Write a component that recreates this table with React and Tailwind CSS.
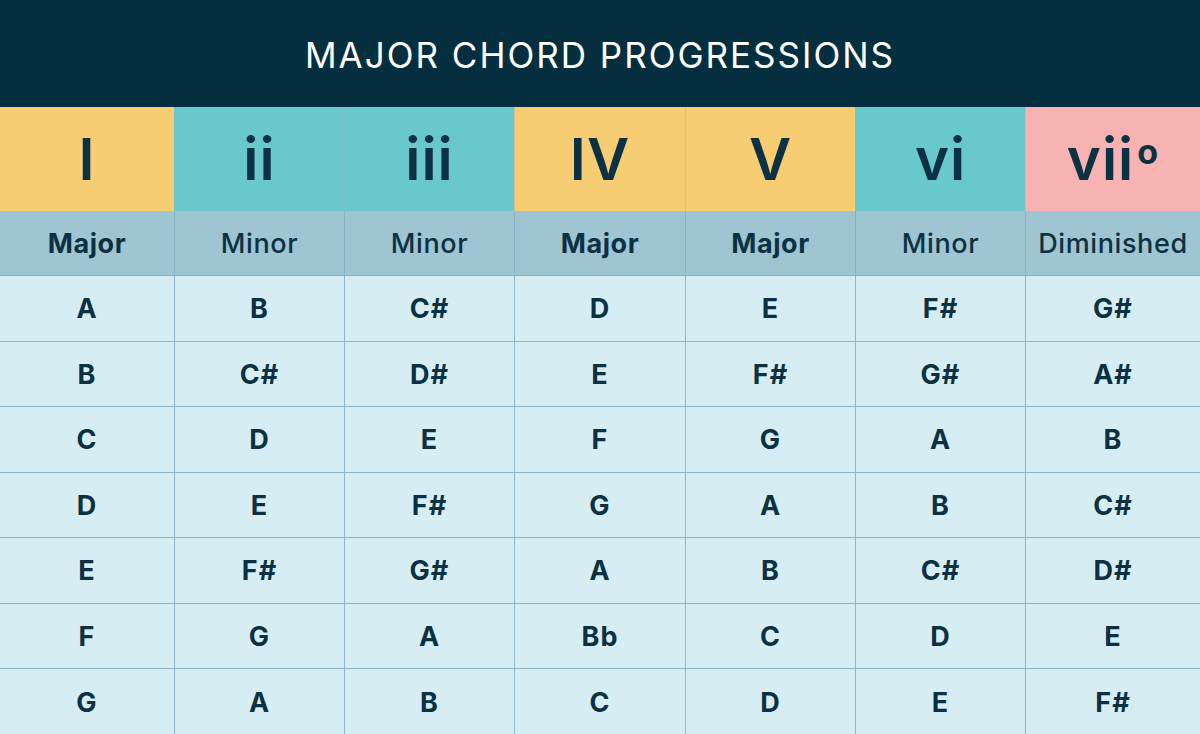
import React from 'react';

const numerals = [
    { label: 'I', bg: 'bg-[#f6cd73]' },
    { label: 'ii', bg: 'bg-[#69c8cc]' },
    { label: 'iii', bg: 'bg-[#69c8cc]' },
    { label: 'IV', bg: 'bg-[#f6cd73]' },
    { label: 'V', bg: 'bg-[#f6cd73]' },
    { label: 'vi', bg: 'bg-[#69c8cc]' },
    { label: 'vii', bg: 'bg-[#f6b3b1]', dim: true },
];

const qualities = [
    { label: 'Major', bold: true },
    { label: 'Minor' },
    { label: 'Minor' },
    { label: 'Major', bold: true },
    { label: 'Major', bold: true },
    { label: 'Minor' },
    { label: 'Diminished' },
];

const rows = [
    ['A', 'B', 'C#', 'D', 'E', 'F#', 'G#'],
    ['B', 'C#', 'D#', 'E', 'F#', 'G#', 'A#'],
    ['C', 'D', 'E', 'F', 'G', 'A', 'B'],
    ['D', 'E', 'F#', 'G', 'A', 'B', 'C#'],
    ['E', 'F#', 'G#', 'A', 'B', 'C#', 'D#'],
    ['F', 'G', 'A', 'Bb', 'C', 'D', 'E'],
    ['G', 'A', 'B', 'C', 'D', 'E', 'F#'],
];

const cols = 'grid grid-cols-[174px_170px_170px_171px_170px_170px_1fr]';

// Chord chart for major keys
const App = () => {
    return (
        <div className="w-[1200px] h-[734px] flex flex-col bg-[#d7edf4] text-[#0b3142] font-['Inter','Noto_Sans',sans-serif] overflow-hidden">
            <div className="h-[107px] shrink-0 bg-[#052f3f] flex items-center justify-center pt-[4px]">
                <h1 className="text-white text-[35px] tracking-[2px] font-normal">MAJOR CHORD PROGRESSIONS</h1>
            </div>
            <div className={`${cols} h-[104px] shrink-0`}>
                {numerals.map((n, i) => (
                    <div key={i} className={`${n.bg} flex items-center justify-center ${i > 0 ? 'border-l border-[#8fb9c6]/40' : ''}`}>
                        <span className="text-[58px] font-semibold leading-none tracking-[1px]">
                            {n.label}
                            {n.dim && <span className="text-[34px] align-[16px] ml-[3px] font-bold">o</span>}
                        </span>
                    </div>
                ))}
            </div>
            <div className={`${cols} h-[65px] shrink-0 bg-[#9fc4d2] border-b border-[#84afbf]`}>
                {qualities.map((q, i) => (
                    <div key={i} className={`flex items-center justify-center text-[27px] tracking-[0.6px] pt-[2px] ${q.bold ? 'font-bold' : 'font-medium'} ${i > 0 ? 'border-l border-[#88b3c2]' : ''}`}>
                        {q.label}
                    </div>
                ))}
            </div>
            <div className="flex-1 flex flex-col">
                {rows.map((r, ri) => (
                    <div key={ri} className={`${cols} flex-1 ${ri > 0 ? 'border-t border-[#8db7c6]' : ''}`}>
                        {r.map((note, ci) => (
                            <div key={ci} className={`flex items-center justify-center text-[27px] font-bold tracking-[1px] pt-[2px] ${ci > 0 ? 'border-l border-[#8db7c6]' : ''}`}>
                                {note}
                            </div>
                        ))}
                    </div>
                ))}
            </div>
        </div>
    );
};

export default App;
